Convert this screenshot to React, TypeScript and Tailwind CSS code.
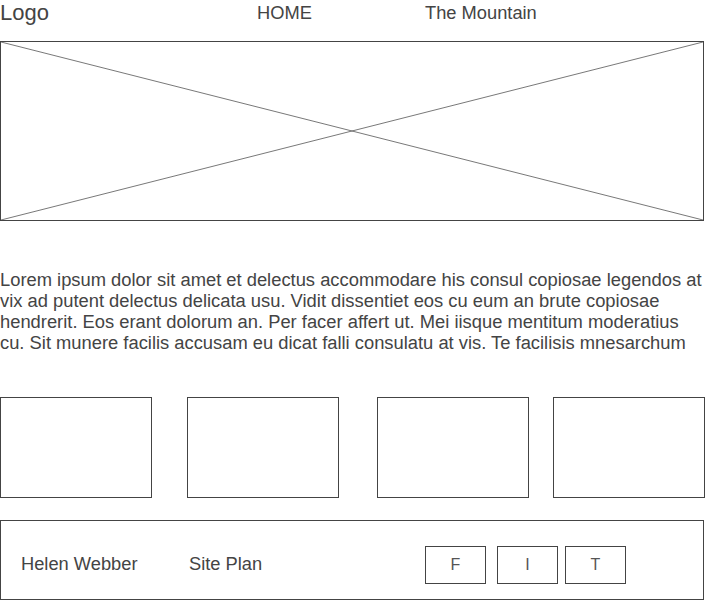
import React from 'react'

const Box = ({ className }: { className: string }) => (
  <div className={`h-[101px] w-[152px] shrink-0 border border-[#444] ${className}`} />
)

const Social = ({ label, className }: { label: string; className: string }) => (
  <div
    className={`flex h-[38px] w-[61px] shrink-0 items-center justify-center border border-[#444] text-[16px] text-[#555] ${className}`}
  >
    {label}
  </div>
)

export default function App() {
  return (
    <div className="relative h-[600px] w-[706px] overflow-hidden bg-white font-['Liberation_Sans',Arial,sans-serif] text-[#444]">
      <header className="flex h-[41px] items-start">
        <div className="w-[257px] text-[22px] leading-[26px]">Logo</div>
        <div className="w-[168px] pt-[3px] text-[18.3px] leading-[20px]">HOME</div>
        <div className="pt-[3px] text-[18.3px] leading-[20px]">The Mountain</div>
      </header>

      <div className="h-[180px] w-[704px] border border-[#444]">
        <svg width="702" height="178" viewBox="0 0 702 178" className="block">
          <line x1="0" y1="0" x2="702" y2="178" stroke="#555" strokeWidth="0.8" />
          <line x1="702" y1="0" x2="0" y2="178" stroke="#555" strokeWidth="0.8" />
        </svg>
      </div>

      <p className="mt-[48px] w-[704px] text-[18.35px] leading-[21px] text-[#444]">
        Lorem ipsum dolor sit amet et delectus accommodare his consul copiosae legendos at vix ad putent
        delectus delicata usu. Vidit dissentiet eos cu eum an brute copiosae hendrerit. Eos erant dolorum
        an. Per facer affert ut. Mei iisque mentitum moderatius cu. Sit munere facilis accusam eu dicat
        falli consulatu at vis. Te facilisis mnesarchum
      </p>

      <div className="mt-[44px] flex">
        <Box className="" />
        <Box className="ml-[35px]" />
        <Box className="ml-[38px]" />
        <Box className="ml-[24px]" />
      </div>

      <footer className="mt-[22px] flex h-[80px] w-[704px] items-start border border-[#444] pt-[25px] text-[18.3px]">
        <div className="ml-[20px] w-[168px] pt-[7px] leading-[22px]">Helen Webber</div>
        <div className="w-[236px] pt-[7px] leading-[22px]">Site Plan</div>
        <Social label="F" className="" />
        <Social label="I" className="ml-[11px]" />
        <Social label="T" className="ml-[7px]" />
      </footer>
    </div>
  )
}
